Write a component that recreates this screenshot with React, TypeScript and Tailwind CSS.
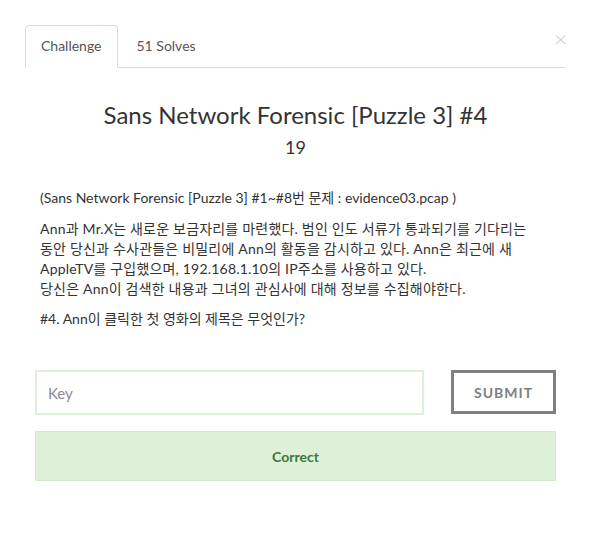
export default function App() {
  const font = { fontFamily: 'Lato, "Noto Sans CJK KR", sans-serif' };
  return (
    <div className="min-h-screen bg-white text-[#333]" style={font}>
      <div className="relative px-[25px] pt-[25px]">
        {/* close */}
        <button className="absolute right-[24px] top-[28px] text-[22px] leading-none text-[#c4c4c4] font-light">
          ×
        </button>

        {/* tabs */}
        <div className="flex border-b border-[#ddd]">
          <div className="-mb-px rounded-t border border-[#ddd] border-b-white bg-white px-[15px] py-[10px] text-[14px] leading-[20px] text-[#555]">
            Challenge
          </div>
          <div className="ml-[4px] px-[15px] py-[11px] text-[14px] leading-[20px] text-[#555]">
            51 Solves
          </div>
        </div>

        {/* body */}
        <div className="px-[10px]">
          <h2 className="mt-[32px] text-center text-[24px] leading-[30px] text-[#333]">
            Sans Network Forensic [Puzzle 3] #4
          </h2>
          <h3 className="mt-[5px] text-center text-[18px] leading-[24px] text-[#333]">19</h3>

          <div className="mt-[29px] px-[5px] text-[14px] leading-[20px] text-[#333]">
            <p>(Sans Network Forensic [Puzzle 3] #1~#8번 문제 : evidence03.pcap )</p>
            <p className="mt-[11px] tracking-[0.2px]">
              Ann과 Mr.X는 새로운 보금자리를 마련했다. 범인 인도 서류가 통과되기를 기다리는
              <br />
              동안 당신과 수사관들은 비밀리에 Ann의 활동을 감시하고 있다. Ann은 최근에 새
              <br />
              AppleTV를 구입했으며, 192.168.1.10의 IP주소를 사용하고 있다.
              <br />
              당신은 Ann이 검색한 내용과 그녀의 관심사에 대해 정보를 수집해야한다.
            </p>
            <p className="mt-[10px]">#4. Ann이 클릭한 첫 영화의 제목은 무엇인가?</p>
          </div>

          <div className="mt-[41px] flex items-start gap-[27px]">
            <input
              className="h-[45px] flex-1 border-2 border-[#dff0d8] px-[11px] text-[15px] text-[#555] outline-none placeholder:text-[#8a8a9a]"
              placeholder="Key"
            />
            <button className="h-[44px] w-[105px] border-[3px] border-[#808080] text-[14px] font-bold tracking-[1px] text-[#808080]">
              SUBMIT
            </button>
          </div>

          <div className="mt-[16px] flex h-[50px] items-center justify-center border border-[#d6e9c6] bg-[#dff0d8] text-[14px] font-bold text-[#3c763d]">
            Correct
          </div>
        </div>
      </div>
    </div>
  );
}
